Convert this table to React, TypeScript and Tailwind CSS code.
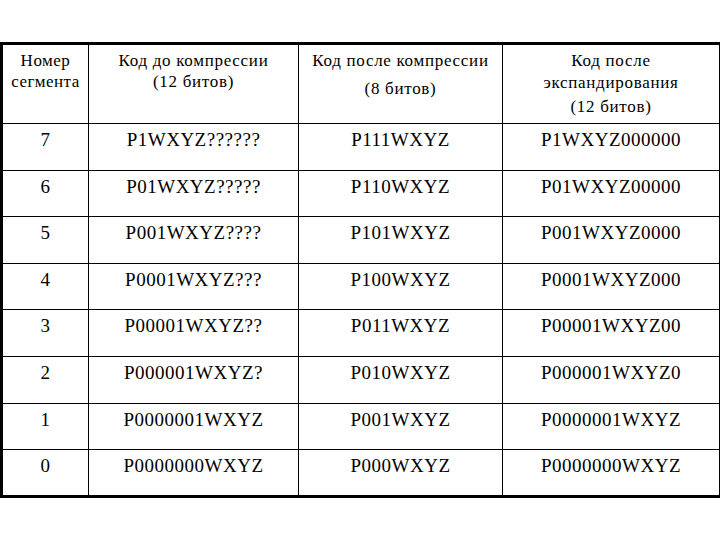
import React from "react";

const rows = [
  ["7", "P1WXYZ??????", "P111WXYZ", "P1WXYZ000000"],
  ["6", "P01WXYZ?????", "P110WXYZ", "P01WXYZ00000"],
  ["5", "P001WXYZ????", "P101WXYZ", "P001WXYZ0000"],
  ["4", "P0001WXYZ???", "P100WXYZ", "P0001WXYZ000"],
  ["3", "P00001WXYZ??", "P011WXYZ", "P00001WXYZ00"],
  ["2", "P000001WXYZ?", "P010WXYZ", "P000001WXYZ0"],
  ["1", "P0000001WXYZ", "P001WXYZ", "P0000001WXYZ"],
  ["0", "P0000000WXYZ", "P000WXYZ", "P0000000WXYZ"],
];

export default function App() {
  return (
    <div className="w-[720px] h-[540px] bg-white text-black pt-[42px] font-['Liberation_Serif','Times_New_Roman',serif]">
      <table className="border-collapse border-[3px] border-black table-fixed w-[719px]">
        <colgroup>
          <col className="w-[87px]" />
          <col className="w-[210px]" />
          <col className="w-[204px]" />
          <col className="w-[218px]" />
        </colgroup>
        <thead>
          <tr className="h-[80px] align-top text-[17px] leading-[21px] tracking-[0.7px]">
            <th className="border border-black font-normal text-center pt-[5px] px-0 tracking-[0.5px]">
              <div>Номер</div>
              <div>сегмента</div>
            </th>
            <th className="border border-black font-normal text-center pt-[5px]">
              <div>Код до компрессии</div>
              <div>(12 битов)</div>
            </th>
            <th className="border border-black font-normal text-center pt-[5px]">
              <div>Код после компрессии</div>
              <div className="mt-[7px]">(8 битов)</div>
            </th>
            <th className="border border-black font-normal text-center pt-[5px]">
              <div>Код после</div>
              <div className="mt-[1px]">экспандирования</div>
              <div className="mt-[3px]">(12 битов)</div>
            </th>
          </tr>
        </thead>
        <tbody>
          {rows.map((r) => (
            <tr key={r[0]} className="h-[46.6px] align-top text-[19px] leading-[24px] tracking-[0.5px]">
              {r.map((c, i) => (
                <td key={i} className="border border-black text-center pt-[4px]">
                  {c}
                </td>
              ))}
            </tr>
          ))}
        </tbody>
      </table>
    </div>
  );
}
